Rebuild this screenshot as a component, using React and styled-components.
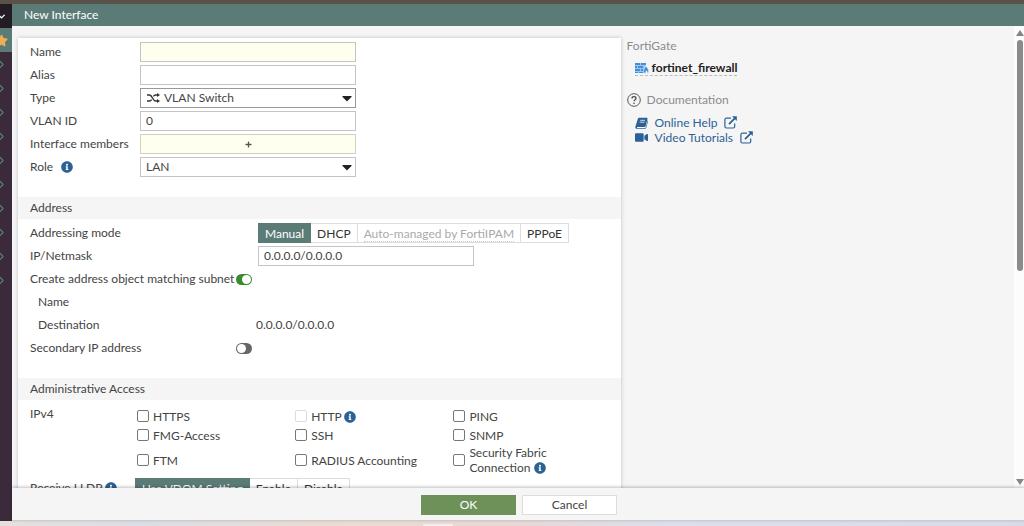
import { useState } from "react";
import styled, { createGlobalStyle } from "styled-components";
import { FaInfoCircle, FaCaretDown, FaVideo, FaStar, FaPlus } from "react-icons/fa";
import { FiChevronDown, FiChevronRight } from "react-icons/fi";

const menuItems = [
  "Network",
  "Policy & Objects",
  "Security Profiles",
  "VPN",
  "User & Authentication",
  "WiFi & Switch Controller",
  "System",
  "Security Fabric",
  "Log & Report",
  "Monitor",
];

const accessOptions = [
  { id: "https", label: "HTTPS" },
  { id: "http", label: "HTTP", info: true, disabled: true },
  { id: "ping", label: "PING" },
  { id: "fmg", label: "FMG-Access" },
  { id: "ssh", label: "SSH" },
  { id: "snmp", label: "SNMP" },
  { id: "ftm", label: "FTM" },
  { id: "radius", label: "RADIUS Accounting" },
  { id: "fabric", label: "Security Fabric Connection", info: true },
];

function ExternalIcon() {
  return (
    <svg width="13" height="13" viewBox="0 0 13 13" fill="none" aria-hidden="true">
      <path
        d="M7 2.2H2.4C1.5 2.2 .9 2.8 .9 3.7v6.8c0 .9.6 1.5 1.5 1.5h6.8c.9 0 1.5-.6 1.5-1.5V7.6"
        stroke="currentColor"
        strokeWidth="1.2"
      />
      <path d="M5 8.2 11 2.2" stroke="currentColor" strokeWidth="1.7" />
      <path d="M8 .2h4.8V5z" fill="currentColor" />
    </svg>
  );
}

function FirewallIcon() {
  return (
    <svg width="14" height="12" viewBox="0 0 14 12" aria-hidden="true">
      <path fill="#9cc6ee" d="M0 1h11v10H0z" />
      <path
        fill="#3f8fdc"
        d="M0 1h5v2H0zM6 1h5v2H6zM0 4h2v2H0zM3 4h5v2H3zM0 7h5v2H0zM6 7h2v2H6zM0 10h3v1H0zM4 10h4v1H4z"
      />
      <path
        fill="#3f8fdc"
        stroke="#f5f5f5"
        strokeWidth=".5"
        d="M10.500 3.500c.2 1.400 3.100 2.700 3.100 5.400 0 1.200-.4 2-1.100 2.600.1-1.300-.4-2-1.200-2.900-.2 1.100-1 1.600-.9 2.900C9 11 8.300 10 8.500 8.700 8.700 7 10.500 6 10.500 3.500z"
      />
    </svg>
  );
}

function HelpIcon() {
  return (
    <svg width="14" height="14" viewBox="0 0 14 14" fill="none" aria-hidden="true">
      <circle cx="7" cy="7" r="6.3" stroke="#555" />
      <path
        d="M5 5.500C5 4.300 5.900 3.700 7 3.700s2 .7 2 1.700C9 6.700 7 6.800 7 8.300"
        stroke="#444"
        strokeWidth="1.2"
      />
      <circle cx="7" cy="10.2" r=".8" fill="#444" />
    </svg>
  );
}

function BookIcon() {
  return (
    <svg width="13" height="12" viewBox="0 0 13 12" aria-hidden="true">
      <path
        fill="currentColor"
        d="M4.500.8h7.300c.6 0 .9.4.7 1l-1.900 7.500c-.1.400-.5.700-.9.700H2.200c-.4 0-.4.900.1.900h7.900c.3 0 .5-.2.600-.5l1.900-7.300c.4.300.4.700.3 1.100l-1.700 6.500c-.2.700-.7 1.100-1.400 1.100H2C.8 11.800.1 10.700.4 9.700L2.700 2.200C3 1.300 3.600.8 4.500.8z"
      />
      <path d="M5.200 3.300h4.800M4.700 5.200h4.800" stroke="#f5f5f5" strokeWidth=".8" />
    </svg>
  );
}

function ShuffleIcon() {
  return (
    <svg width="13" height="10" viewBox="0 0 13 10" fill="none" aria-hidden="true">
      <path
        d="M0 2h2.500C5.500 2 5.500 8 8.500 8H11M0 8h2.500c1 0 1.600-.6 2.100-1.400M6.400 3.400C6.900 2.600 7.500 2 8.500 2H11"
        stroke="currentColor"
        strokeWidth="1.4"
      />
      <path d="M10 0 13 2 10 4zM10 6l3 2-3 2z" fill="currentColor" />
    </svg>
  );
}

function Segmented({ label, options, value, onChange }) {
  return (
    <Segments role="group" aria-label={label}>
      {options.map((o) => (
        <Segment
          key={o.text}
          type="button"
          $active={o.text === value}
          aria-pressed={o.text === value}
          disabled={o.disabled}
          onClick={() => onChange(o.text)}
        >
          <span>{o.text}</span>
        </Segment>
      ))}
    </Segments>
  );
}

export default function App() {
  const [mode, setMode] = useState("Manual");
  const [lldp, setLldp] = useState("Use VDOM Setting");

  return (
    <>
      <GlobalStyle />
      <Page>
        <BrowserEdge />
        <Main>
          <Sidebar aria-label="Main menu">
            <MenuTop type="button" aria-label="Dashboard">
              <FiChevronDown />
            </MenuTop>
            <MenuFavorite type="button" aria-label="Favorites">
              <FaStar />
            </MenuFavorite>
            {menuItems.map((item) => (
              <MenuItem key={item} type="button" aria-label={item}>
                <FiChevronRight />
              </MenuItem>
            ))}
          </Sidebar>
          <Content>
            <Header>New Interface</Header>
            <Body>
              <Columns>
                <Panel>
                  <Section>
                    <Row $label={110}>
                      <label htmlFor="name">Name</label>
                      <Field id="name" $required />
                    </Row>
                    <Row $label={110}>
                      <label htmlFor="alias">Alias</label>
                      <Field id="alias" />
                    </Row>
                    <Row $label={110}>
                      <label htmlFor="type">Type</label>
                      <SelectBox>
                        <Select id="type" $icon $focused>
                          <option>VLAN Switch</option>
                        </Select>
                        <SelectIcon>
                          <ShuffleIcon />
                        </SelectIcon>
                        <Caret />
                      </SelectBox>
                    </Row>
                    <Row $label={110}>
                      <label htmlFor="vlan">VLAN ID</label>
                      <Field id="vlan" defaultValue="0" />
                    </Row>
                    <Row $label={110}>
                      <label htmlFor="members">Interface members</label>
                      <AddButton id="members" type="button" aria-label="Add interface members">
                        <FaPlus />
                      </AddButton>
                    </Row>
                    <Row $label={110}>
                      <label htmlFor="role">
                        Role <Info $gap={5} />
                      </label>
                      <SelectBox>
                        <Select id="role">
                          <option>LAN</option>
                        </Select>
                        <Caret />
                      </SelectBox>
                    </Row>
                  </Section>

                  <SectionTitle>Address</SectionTitle>
                  <Section>
                    <Row $label={228}>
                      <span>Addressing mode</span>
                      <Segmented
                        label="Addressing mode"
                        value={mode}
                        onChange={setMode}
                        options={[
                          { text: "Manual" },
                          { text: "DHCP" },
                          { text: "Auto-managed by FortiIPAM", disabled: true },
                          { text: "PPPoE" },
                        ]}
                      />
                    </Row>
                    <Row $label={228}>
                      <label htmlFor="ip">IP/Netmask</label>
                      <Field id="ip" defaultValue="0.0.0.0/0.0.0.0" />
                    </Row>
                    <Row $label={206}>
                      <label htmlFor="matching">Create address object matching subnet</label>
                      <Toggle id="matching" type="checkbox" role="switch" defaultChecked />
                    </Row>
                    <Row $label={218} $indent>
                      <span>Name</span>
                    </Row>
                    <Row $label={218} $indent>
                      <span>Destination</span>
                      <span>0.0.0.0/0.0.0.0</span>
                    </Row>
                    <Row $label={206}>
                      <label htmlFor="secondary">Secondary IP address</label>
                      <Toggle id="secondary" type="checkbox" role="switch" />
                    </Row>
                  </Section>

                  <SectionTitle>Administrative Access</SectionTitle>
                  <Section>
                    <Row $label={105} $top>
                      <span>IPv4</span>
                      <AccessGrid>
                        {accessOptions.map((o) => (
                          <Option key={o.id} htmlFor={o.id}>
                            <Check id={o.id} type="checkbox" disabled={o.disabled} />
                            <span>
                              {o.label} {o.info && <Info />}
                            </span>
                          </Option>
                        ))}
                      </AccessGrid>
                    </Row>
                    <Row $label={105}>
                      <span>
                        Receive LLDP <Info />
                      </span>
                      <Segmented
                        label="Receive LLDP"
                        value={lldp}
                        onChange={setLldp}
                        options={[
                          { text: "Use VDOM Setting" },
                          { text: "Enable" },
                          { text: "Disable" },
                        ]}
                      />
                    </Row>
                  </Section>
                </Panel>

                <Aside>
                  <AsideTitle>FortiGate</AsideTitle>
                  <Device href="#device">
                    <FirewallIcon />
                    fortinet_firewall
                  </Device>
                  <AsideTitle $spaced>
                    <HelpIcon />
                    Documentation
                  </AsideTitle>
                  <DocLink href="#help">
                    <BookIcon />
                    Online Help
                    <ExternalIcon />
                  </DocLink>
                  <DocLink href="#videos">
                    <FaVideo size={13} />
                    Video Tutorials
                    <ExternalIcon />
                  </DocLink>
                </Aside>
              </Columns>
              <Scrollbar aria-hidden="true">
                <Arrow viewBox="0 0 8 6">
                  <path d="M4 0 8 6H0z" />
                </Arrow>
                <Track>
                  <Thumb />
                </Track>
                <Arrow viewBox="0 0 8 6">
                  <path d="M0 0h8L4 6z" />
                </Arrow>
              </Scrollbar>
            </Body>
            <Footer>
              <Action type="button" $primary>
                OK
              </Action>
              <Action type="button">Cancel</Action>
            </Footer>
          </Content>
        </Main>
        <Desktop>
          <DesktopTab />
        </Desktop>
      </Page>
    </>
  );
}

const GlobalStyle = createGlobalStyle`
  * {
    box-sizing: border-box;
  }

  body {
    margin: 0;
    overflow: hidden;
    background: #f5f5f5;
    color: #444;
    font-family: Lato, "Open Sans", sans-serif;
    font-size: 12px;
    line-height: 20px;
  }

  button, input, select {
    margin: 0;
    font: inherit;
    color: inherit;
  }
`;

const Page = styled.div`
  display: flex;
  flex-direction: column;
  height: 100vh;
`;

const BrowserEdge = styled.div`
  flex: none;
  height: 4px;
  background: #595248;
`;

const Main = styled.div`
  flex: 1;
  min-height: 0;
  display: flex;
`;

const Sidebar = styled.nav`
  flex: none;
  display: flex;
  flex-direction: column;
  width: 12px;
  overflow: hidden;
  background: #3b2b3a;
`;

const MenuItem = styled.button`
  flex: none;
  display: flex;
  align-items: center;
  justify-content: flex-end;
  width: 8px;
  height: 24px;
  padding: 0;
  border: 0;
  background: none;
  color: #5c7f80;

  svg {
    flex: none;
    width: 13px;
    height: 13px;
  }
`;

const MenuTop = styled(MenuItem)`
  width: 12px;
  padding-right: 5px;
  background: #241c24;
  color: #fff;

  svg {
    width: 11px;
    height: 11px;
    stroke-width: 3;
  }
`;

const MenuFavorite = styled(MenuItem)`
  width: 12px;
  padding-right: 4px;
  background: #5b7b77;
  color: #efae55;
`;

const Content = styled.main`
  flex: 1;
  min-width: 0;
  display: flex;
  flex-direction: column;
`;

const Header = styled.h1`
  flex: none;
  margin: 0;
  padding: 1px 12px;
  background: #5b7b77;
  color: #fff;
  font-size: 12px;
  font-weight: 400;
`;

const Body = styled.div`
  flex: 1;
  min-height: 0;
  display: flex;
`;

const Columns = styled.div`
  flex: 1;
  min-width: 0;
  display: grid;
  grid-template-columns: 14fr 9fr;
  gap: 6px;
  padding: 12px 0 0 6px;
  overflow: hidden;
`;

const Panel = styled.form`
  padding: 4px 0 12px;
  background: #fff;
  box-shadow: 0 0 4px rgba(0, 0, 0, 0.22);
`;

const Section = styled.div`
  display: flex;
  flex-direction: column;
  gap: 3px;
  padding: 0 9px 0 12px;
`;

const SectionTitle = styled.h2`
  margin: 20px 0 4px;
  padding: 1px 12px;
  background: #f5f5f5;
  font-size: 12px;
  font-weight: 400;
`;

const Row = styled.div`
  display: grid;
  grid-template-columns: ${({ $label }) => $label}px minmax(0, 1fr);
  align-items: ${({ $top }) => ($top ? "start" : "center")};
  min-height: 20px;
  padding-left: ${({ $indent }) => ($indent ? 8 : 0)}px;
  white-space: nowrap;
`;

const Field = styled.input`
  width: 216px;
  height: 20px;
  padding: 0 5px;
  border: 1px solid #c4c4c4;
  border-radius: 0;
  background: ${({ $required }) => ($required ? "#ffffee" : "#fff")};
`;

const SelectBox = styled.div`
  position: relative;
  width: 216px;
  height: 20px;
`;

const Select = styled.select`
  display: block;
  width: 100%;
  height: 100%;
  padding: 0 20px 0 ${({ $icon }) => ($icon ? 23 : 5)}px;
  border: 1px solid ${({ $focused }) => ($focused ? "#999" : "#c4c4c4")};
  border-radius: 0;
  background: #fff;
  line-height: 18px;
  appearance: none;
`;

const SelectIcon = styled.span`
  position: absolute;
  top: 0;
  bottom: 0;
  left: 7px;
  display: flex;
  align-items: center;
  pointer-events: none;
  color: #333;
`;

const Caret = styled(FaCaretDown)`
  position: absolute;
  top: 2px;
  right: 4px;
  width: 10px;
  height: 16px;
  pointer-events: none;
  color: #222;
`;

const AddButton = styled.button`
  display: flex;
  align-items: center;
  justify-content: center;
  width: 216px;
  height: 20px;
  padding: 0;
  border: 1px solid #d0d0c4;
  background: #ffffee;

  svg {
    width: 7px;
    height: 7px;
    color: #555;
  }
`;

const Info = styled(FaInfoCircle)`
  width: 12px;
  height: 12px;
  margin-left: ${({ $gap }) => $gap || 0}px;
  vertical-align: -2px;
  color: #2c6196;
`;

const Segments = styled.div`
  display: flex;
`;

const Segment = styled.button`
  height: 20px;
  padding: 0 6px;
  border: 1px solid ${({ $active }) => ($active ? "#5b7b77" : "#ddd")};
  background: ${({ $active }) => ($active ? "#5b7b77" : "#fff")};
  color: ${({ $active }) => ($active ? "#fff" : "#333")};
  line-height: 17px;
  white-space: nowrap;

  & + & {
    border-left-width: 0;
  }

  &:disabled {
    color: #aaa;
  }

  &:disabled span {
    border-bottom: 1px dotted #ccc;
  }
`;

const Toggle = styled.input`
  display: flex;
  align-items: center;
  width: 16px;
  height: 11px;
  padding: 1px;
  border-radius: 6px;
  background: #666;
  appearance: none;

  &::before {
    content: "";
    width: 9px;
    height: 9px;
    border-radius: 50%;
    background: #fff;
  }

  &:checked {
    justify-content: flex-end;
    background: #3c8a2e;
  }
`;

const AccessGrid = styled.div`
  display: grid;
  grid-template-columns: repeat(3, minmax(0, 1fr));
  row-gap: 1px;
  padding: 3px 0 0 2px;
`;

const Option = styled.label`
  display: flex;
  align-items: center;
  gap: 4px;
  min-height: 18px;
  line-height: 15px;
  white-space: normal;

  span {
    max-width: 112px;
  }
`;

const Check = styled.input`
  flex: none;
  width: 12px;
  height: 12px;
  border: 1px solid #777;
  border-radius: 2px;
  background: #fff;
  appearance: none;

  &:disabled {
    border-color: #ddd;
  }
`;

const Aside = styled.aside`
  display: flex;
  flex-direction: column;
  align-items: flex-start;
`;

const AsideTitle = styled.h2`
  display: flex;
  align-items: center;
  gap: 6px;
  margin: ${({ $spaced }) => ($spaced ? "14px 0 5px" : "-2px 0 4px")};
  color: #8c8c8c;
  font-size: 12px;
  font-weight: 400;
  line-height: 20px;
`;

const Device = styled.a`
  display: flex;
  align-items: center;
  gap: 3px;
  margin-left: 8px;
  border-bottom: 1px dashed #bbb;
  color: #222;
  font-weight: 700;
  line-height: 15px;
  text-decoration: none;
`;

const DocLink = styled.a`
  display: flex;
  align-items: center;
  gap: 7px;
  margin-left: 8px;
  color: #2c6196;
  line-height: 15px;
  text-decoration: none;
`;

const Scrollbar = styled.div`
  flex: none;
  display: flex;
  flex-direction: column;
  align-items: center;
  gap: 4px;
  width: 10px;
  padding: 4px 0 3px 2px;
  background: #fcfcfc;
`;

const Arrow = styled.svg`
  flex: none;
  width: 8px;
  height: 6px;
  fill: #858585;
`;

const Track = styled.div`
  flex: 1;
  width: 6px;
`;

const Thumb = styled.div`
  height: 53%;
  border-radius: 3px;
  background: #8b8b8b;
`;

const Footer = styled.footer`
  position: relative;
  flex: none;
  display: flex;
  justify-content: center;
  gap: 6px;
  padding: 7px 0 5px 2px;
  border-bottom: 1px solid #ccc;
  background: #f5f5f5;
  box-shadow: 0 -1px 3px rgba(0, 0, 0, 0.25);
`;

const Action = styled.button`
  width: 95px;
  height: 20px;
  padding: 0;
  border: 1px solid ${({ $primary }) => ($primary ? "#6e9159" : "#ddd")};
  background: ${({ $primary }) => ($primary ? "#6e9159" : "#fff")};
  color: ${({ $primary }) => ($primary ? "#fff" : "#444")};
  line-height: 18px;
`;

const Desktop = styled.div`
  flex: none;
  display: flex;
  align-items: flex-end;
  justify-content: center;
  height: 5px;
  padding-right: 148px;
  background: linear-gradient(90deg, #e6e0dd, #dcdee6 14%, #ecdcd2 34%, #e8d8d6 50%, #dcdfec 65%, #d8dce8);
`;

const DesktopTab = styled.div`
  width: 30px;
  height: 2px;
  border-radius: 2px 2px 0 0;
  background: #f4efee;
`;
